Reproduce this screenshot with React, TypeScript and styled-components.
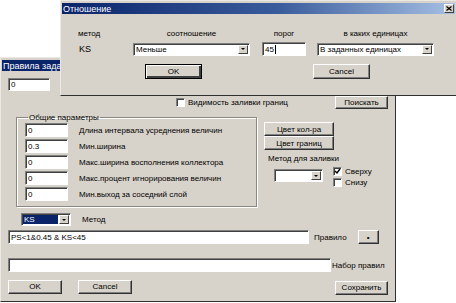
import React from 'react';
import styled, { createGlobalStyle } from 'styled-components';

const GlobalStyle = createGlobalStyle`
    html, body {
        margin: 0;
        padding: 0;
        background: #fff;
    }
    body {
        font-family: "Liberation Sans", Arial, sans-serif;
        font-size: 8px;
        color: #000;
    }
`;

const Desktop = styled.div`
    position: relative;
    width: 456px;
    height: 303px;
    overflow: hidden;
    background: #fff;
`;

const Window = styled.div<{ $left: number; $top: number; $width: number; $height: number }>`
    position: absolute;
    left: ${(p) => p.$left}px;
    top: ${(p) => p.$top}px;
    width: ${(p) => p.$width}px;
    height: ${(p) => p.$height}px;
    box-sizing: border-box;
    padding: 1px;
    background: #d8d3ca;
    border: 1px solid;
    border-color: #ece9e4 #303030 #303030 #ece9e4;
    display: flex;
    flex-direction: column;
`;

const TitleBar = styled.div<{ $gradient?: boolean }>`
    height: 11px;
    margin-top: 1px;
    flex-shrink: 0;
    display: flex;
    align-items: center;
    padding-left: 1px;
    background: ${(p) => (p.$gradient ? 'linear-gradient(to right, #0a246a 0%, #3a5c9c 55%, #a6c0e4 100%)' : '#0a246a')};
    color: #fff;
    font-size: 9px;
    white-space: nowrap;
    overflow: hidden;
`;

const TitleText = styled.span`
    flex: 1;
`;

const CloseButton = styled.div`
    width: 10px;
    height: 9px;
    margin-right: 1px;
    background: #d8d3ca;
    border: 1px solid;
    border-color: #fff #404040 #404040 #fff;
    box-sizing: border-box;
    display: flex;
    align-items: center;
    justify-content: center;
`;

const Row = styled.div<{ $mt: number; $h?: number }>`
    display: flex;
    align-items: center;
    margin-top: ${(p) => p.$mt}px;
    height: ${(p) => (p.$h ? `${p.$h}px` : 'auto')};
    flex-shrink: 0;
`;

const Field = styled.div<{ $w: number; $h?: number; $ml?: number }>`
    width: ${(p) => p.$w}px;
    height: ${(p) => p.$h ?? 14}px;
    margin-left: ${(p) => p.$ml ?? 0}px;
    box-sizing: border-box;
    background: #fff;
    border: 1px solid;
    border-color: #808080 #fff #fff #808080;
    box-shadow: inset 1px 1px #404040;
    padding-left: 2px;
    display: flex;
    align-items: center;
    flex-shrink: 0;
    white-space: nowrap;
    overflow: hidden;
`;

const Caret = styled.span`
    display: inline-block;
    width: 1px;
    height: 9px;
    background: #000;
    margin-left: 1px;
`;

const ComboText = styled.span<{ $selected?: boolean }>`
    flex: 1;
    align-self: stretch;
    display: flex;
    align-items: center;
    margin: 1px 0;
    padding-left: 1px;
    background: ${(p) => (p.$selected ? '#0a246a' : 'transparent')};
    color: ${(p) => (p.$selected ? '#fff' : '#000')};
`;

const DropButton = styled.span`
    width: 10px;
    align-self: stretch;
    margin: 1px;
    box-sizing: border-box;
    background: #d8d3ca;
    border: 1px solid;
    border-color: #fff #404040 #404040 #fff;
    display: flex;
    align-items: center;
    justify-content: center;
    &::after {
        content: '';
        border-left: 2px solid transparent;
        border-right: 2px solid transparent;
        border-top: 2px solid #000;
    }
`;

const Button = styled.div<{ $w: number; $h?: number; $ml?: number; $default?: boolean }>`
    width: ${(p) => p.$w}px;
    height: ${(p) => p.$h ?? 14}px;
    margin-left: ${(p) => p.$ml ?? 0}px;
    box-sizing: border-box;
    background: #d8d3ca;
    border: 1px solid;
    border-color: ${(p) => (p.$default ? '#000' : '#fff #303030 #303030 #fff')};
    box-shadow: ${(p) => (p.$default ? 'inset 1px 1px #fff, inset -2px -2px #404040' : 'inset -1px -1px #808080')};
    display: flex;
    align-items: center;
    justify-content: center;
    flex-shrink: 0;
    white-space: nowrap;
`;

const Label = styled.span<{ $ml?: number; $w?: number; $center?: boolean }>`
    margin-left: ${(p) => p.$ml ?? 0}px;
    width: ${(p) => (p.$w ? `${p.$w}px` : 'auto')};
    text-align: ${(p) => (p.$center ? 'center' : 'left')};
    white-space: nowrap;
    flex-shrink: 0;
`;

const CheckBox = styled.span<{ $ml?: number }>`
    width: 9px;
    height: 9px;
    margin-left: ${(p) => p.$ml ?? 0}px;
    margin-right: 3px;
    box-sizing: border-box;
    background: #fff;
    border: 1px solid;
    border-color: #808080 #fff #fff #808080;
    box-shadow: inset 1px 1px #404040;
    display: flex;
    align-items: center;
    justify-content: center;
    flex-shrink: 0;
`;

const Spacer = styled.div`
    flex: 1;
`;

/* back window */

const BackBody = styled.div`
    display: flex;
    flex-direction: column;
`;

const MidRow = styled.div`
    display: flex;
    align-items: flex-start;
    margin-top: 4px;
`;

const Group = styled.fieldset`
    margin: 0 0 0 14px;
    width: 241px;
    box-sizing: border-box;
    padding: 1px 8px 5px 8px;
    border: 1px solid #8c8880;
    box-shadow: 1px 1px #fff, inset 1px 1px #fff;
    min-width: 0;
`;

const Legend = styled.legend`
    padding: 0 1px;
    margin-left: 3px;
    font-size: 8px;
    line-height: 9px;
`;

const ParamList = styled.div`
    display: grid;
    grid-template-columns: 43px 1fr;
    grid-auto-rows: 14px;
    row-gap: 2px;
    column-gap: 11px;
    align-items: center;
`;

const SideColumn = styled.div`
    display: flex;
    flex-direction: column;
    margin-left: 7px;
    margin-top: 9px;
`;

const CheckColumn = styled.div`
    display: flex;
    flex-direction: column;
    gap: 1px;
    margin-left: 10px;
    margin-top: 2px;
`;

const CheckRow = styled.div`
    display: flex;
    align-items: center;
    height: 10px;
`;

/* front window */

const FrontBody = styled.div`
    display: flex;
    flex-direction: column;
    padding-left: 16px;
`;

const FormGrid = styled.div`
    display: grid;
    grid-template-columns: 55px 129px 55px 117px;
    grid-template-rows: 9px 14px;
    row-gap: 4px;
    margin-top: 15px;
    align-items: center;
`;

const Check = () => (
    <svg width="7" height="7" viewBox="0 0 7 7">
        <path d="M1 3 L3 5 L6 1" stroke="#000" strokeWidth="1.4" fill="none" />
    </svg>
);

const params = [
    ['0', 'Длина интервала усреднения величин'],
    ['0.3', 'Мин.ширина'],
    ['0', 'Макс.ширина восполнения коллектора'],
    ['0', 'Макс.процент игнорирования величин'],
    ['0', 'Мин.выход за соседний слой'],
];

const App: React.FC = () => {
    return (
        <Desktop>
            <GlobalStyle />

            <Window $left={0} $top={57} $width={396} $height={245}>
                <TitleBar>
                    <TitleText>Правила задания заливки</TitleText>
                </TitleBar>
                <BackBody>
                    <Row $mt={7}>
                        <Field $w={42} $h={13} $ml={6}>0</Field>
                    </Row>
                    <Row $mt={5} $h={13}>
                        <CheckBox $ml={174} />
                        <Label>Видимость заливки границ</Label>
                        <Spacer />
                        <Button $w={53} $h={13} style={{ marginRight: 6 }}>Поискать</Button>
                    </Row>
                    <MidRow>
                        <Group>
                            <Legend>Общие параметры</Legend>
                            <ParamList>
                                {params.map(([value, text]) => (
                                    <React.Fragment key={text}>
                                        <Field $w={43}>{value}</Field>
                                        <Label>{text}</Label>
                                    </React.Fragment>
                                ))}
                            </ParamList>
                        </Group>
                        <SideColumn>
                            <Button $w={70}>Цвет кол-ра</Button>
                            <Button $w={70}>Цвет границ</Button>
                            <Label $ml={4} style={{ marginTop: 4, lineHeight: '9px' }}>Метод для заливки</Label>
                            <Row $mt={1}>
                                <Field $w={49} $h={13} $ml={10} style={{ paddingLeft: 1 }}>
                                    <ComboText />
                                    <DropButton />
                                </Field>
                                <CheckColumn>
                                    <CheckRow>
                                        <CheckBox><Check /></CheckBox>
                                        <Label>Сверху</Label>
                                    </CheckRow>
                                    <CheckRow>
                                        <CheckBox />
                                        <Label>Снизу</Label>
                                    </CheckRow>
                                </CheckColumn>
                            </Row>
                        </SideColumn>
                    </MidRow>
                    <Row $mt={6} $h={13}>
                        <Field $w={50} $h={13} $ml={19} style={{ paddingLeft: 1 }}>
                            <ComboText $selected>KS</ComboText>
                            <DropButton />
                        </Field>
                        <Label $ml={11}>Метод</Label>
                    </Row>
                    <Row $mt={4} $h={14}>
                        <Field $w={301} $ml={6}>PS&lt;1&amp;0.45 &amp; KS&lt;45</Field>
                        <Label $ml={5}>Правило</Label>
                        <Button $w={21} $ml={11}>•</Button>
                    </Row>
                    <Row $mt={14} $h={14}>
                        <Field $w={323} $ml={6} />
                        <Label $ml={1}>Набор правил</Label>
                    </Row>
                    <Row $mt={7} $h={15}>
                        <Button $w={54} $ml={6}>OK</Button>
                        <Button $w={54} $ml={16}>Cancel</Button>
                        <Spacer />
                        <Button $w={53} style={{ marginRight: 6, marginTop: 2 }}>Сохранить</Button>
                    </Row>
                </BackBody>
            </Window>

            <Window $left={60} $top={0} $width={397} $height={96}>
                <TitleBar $gradient>
                    <TitleText>Отношение</TitleText>
                    <CloseButton>
                        <svg width="6" height="5" viewBox="0 0 6 5">
                            <path d="M0.5 0.5 L5.5 4.5 M5.5 0.5 L0.5 4.5" stroke="#000" strokeWidth="1.2" />
                        </svg>
                    </CloseButton>
                </TitleBar>
                <FrontBody>
                    <FormGrid>
                        <Label>метод</Label>
                        <Label $w={117} $center>соотношение</Label>
                        <Label $w={44} $center>порог</Label>
                        <Label $w={117} $center>в каких единицах</Label>

                        <Label $ml={1} style={{ fontSize: 9 }}>KS</Label>
                        <Field $w={117} $h={13} style={{ paddingLeft: 1 }}>
                            <ComboText>Меньше</ComboText>
                            <DropButton />
                        </Field>
                        <Field $w={44} $h={14}>45<Caret /></Field>
                        <Field $w={117} $h={13} style={{ paddingLeft: 1 }}>
                            <ComboText>В заданных единицах</ComboText>
                            <DropButton />
                        </Field>
                    </FormGrid>
                    <Row $mt={8} $h={15}>
                        <Button $w={57} $h={15} $ml={67} $default>OK</Button>
                        <Button $w={57} $h={15} $ml={111}>Cancel</Button>
                    </Row>
                </FrontBody>
            </Window>
        </Desktop>
    );
};

export default App;
